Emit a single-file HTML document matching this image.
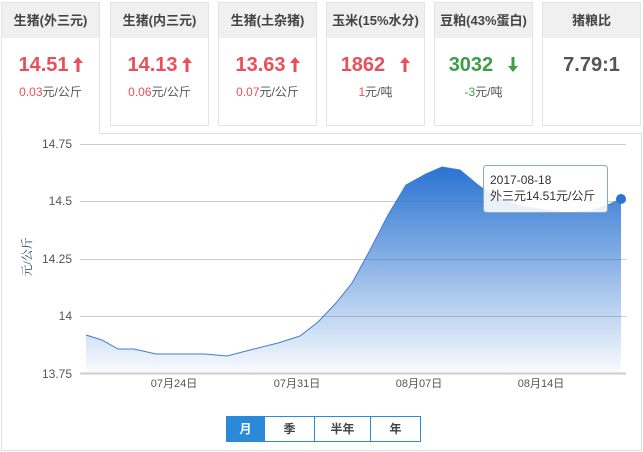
<!DOCTYPE html>
<html><head><meta charset="utf-8"><style>
*{margin:0;padding:0;box-sizing:border-box}
body{width:643px;height:452px;background:#fff;font-family:"Liberation Sans","Noto Sans CJK SC",sans-serif;position:relative;overflow:hidden}
.card{position:absolute;top:2px;width:99px;height:124px;border:1px solid #e3e3e3;background:#fff;text-align:center}
.card .h{height:35px;background:#f0f0f0;line-height:35px;font-size:13px;color:#444;font-weight:bold}
.card .v{font-size:20px;font-weight:bold;margin-top:15px;height:24px;line-height:24px}
.card .s{font-size:12px;color:#555;margin-top:6px}
.red{color:#e8505b}.grn{color:#3d9e4a}
.panel{position:absolute;left:1px;top:133px;width:641px;height:318px;border:1px solid #ddd}
.c1{height:132px;border-bottom:none;z-index:2}
.btns{position:absolute;left:226px;top:416px;height:26px;display:flex;border:1px solid #2a8ad8}
.btns div{font-size:12px;line-height:24px;text-align:center;color:#444;border-left:1px solid #2a8ad8;font-weight:bold}
.ar{display:inline-block;vertical-align:-1px;margin-left:4px}
</style></head><body>
<div class="panel"></div>
<div class="card c1" style="left:1px"><div class="h">生猪(外三元)</div><div class="v red">14.51<svg class="ar" width="10" height="15" viewBox="0 0 10 15"><path d="M5 0 L10 6 L6.5 6 L6.5 15 L3.5 15 L3.5 6 L0 6Z" fill="#e8505b"/></svg></div><div class="s"><span class="red">0.03</span>元/公斤</div></div>
<div class="card" style="left:110px"><div class="h">生猪(内三元)</div><div class="v red">14.13<svg class="ar" width="10" height="15" viewBox="0 0 10 15"><path d="M5 0 L10 6 L6.5 6 L6.5 15 L3.5 15 L3.5 6 L0 6Z" fill="#e8505b"/></svg></div><div class="s"><span class="red">0.06</span>元/公斤</div></div>
<div class="card" style="left:218px"><div class="h">生猪(土杂猪)</div><div class="v red">13.63<svg class="ar" width="10" height="15" viewBox="0 0 10 15"><path d="M5 0 L10 6 L6.5 6 L6.5 15 L3.5 15 L3.5 6 L0 6Z" fill="#e8505b"/></svg></div><div class="s"><span class="red">0.07</span>元/公斤</div></div>
<div class="card" style="left:326px"><div class="h">玉米(15%水分)</div><div class="v red">1862 &nbsp;<svg class="ar" width="10" height="15" viewBox="0 0 10 15"><path d="M5 0 L10 6 L6.5 6 L6.5 15 L3.5 15 L3.5 6 L0 6Z" fill="#e8505b"/></svg></div><div class="s"><span class="red">1</span>元/吨</div></div>
<div class="card" style="left:434px"><div class="h">豆粕(43%蛋白)</div><div class="v grn">3032 &nbsp;<svg class="ar" width="10" height="15" viewBox="0 0 10 15"><path d="M5 15 L10 9 L6.5 9 L6.5 0 L3.5 0 L3.5 9 L0 9Z" fill="#3d9e4a"/></svg></div><div class="s"><span class="grn">-3</span>元/吨</div></div>
<div class="card" style="left:542px"><div class="h">猪粮比</div><div class="v" style="color:#555">7.79:1</div></div>
<svg style="position:absolute;left:0;top:0" width="643" height="452">
<defs><linearGradient id="g" x1="0" y1="0" x2="0" y2="1"><stop offset="0" stop-color="#2a73d2"/><stop offset="1" stop-color="#2a73d2" stop-opacity="0.03"/></linearGradient></defs>
<g stroke="#ccc" stroke-width="1"><line x1="80" y1="144.5" x2="626" y2="144.5"/><line x1="80" y1="201.5" x2="626" y2="201.5"/><line x1="80" y1="259.5" x2="626" y2="259.5"/><line x1="80" y1="316.5" x2="626" y2="316.5"/></g>
<path d="M86 335 L102 340 L118 349 L134 349 L156 354 L180 354 L205 354 L227 356 L250 350 L278 343 L300 336 L318 322 L336 303 L352 283 L370 250 L388 215 L406 185 L426 174 L442 167 L460 170 L478 185 L496 198 L520 206 L545 210 L567 213 L590 211 L608 205 L621 199 L621 372 L86 372 Z" fill="url(#g)"/>
<path d="M86 335 L102 340 L118 349 L134 349 L156 354 L180 354 L205 354 L227 356 L250 350 L278 343 L300 336 L318 322 L336 303 L352 283 L370 250 L388 215 L406 185 L426 174 L442 167 L460 170 L478 185 L496 198 L520 206 L545 210 L567 213 L590 211 L608 205 L621 199" fill="none" stroke="#3d7fcf" stroke-width="1"/>
<line x1="80" y1="373.5" x2="626" y2="373.5" stroke="#ccc" stroke-width="2"/>
<circle cx="621" cy="199" r="5" fill="#2a73d2"/>
<g font-size="12" fill="#555" text-anchor="end" font-family="Liberation Sans,sans-serif"><text x="72" y="148">14.75</text><text x="72" y="205">14.5</text><text x="72" y="263">14.25</text><text x="72" y="320">14</text><text x="72" y="378">13.75</text></g>
<g font-size="11" fill="#555" text-anchor="middle" font-family="Liberation Sans,Noto Sans CJK SC,sans-serif"><text x="174" y="387">07月24日</text><text x="297" y="387">07月31日</text><text x="419" y="387">08月07日</text><text x="541" y="387">08月14日</text></g>
<text transform="translate(31,257) rotate(-90)" font-size="12" fill="#345" text-anchor="middle" font-family="Liberation Serif,Noto Serif CJK SC,serif">元/公斤</text>
<rect x="483.5" y="165.5" width="124" height="47" rx="3" fill="#fff" fill-opacity="0.88" stroke="#8ab" />
<text x="490" y="184" font-size="12" fill="#333" font-family="Liberation Sans,Noto Sans CJK SC,sans-serif">2017-08-18</text>
<text x="490" y="200" font-size="12" fill="#333" font-family="Liberation Sans,Noto Sans CJK SC,sans-serif">外三元14.51元/公斤</text>
</svg>
<div class="btns"><div style="width:37px;background:#2a8ad8;color:#fff;border-left:none">月</div><div style="width:50px">季</div><div style="width:56px">半年</div><div style="width:50px">年</div></div>
</body></html>
